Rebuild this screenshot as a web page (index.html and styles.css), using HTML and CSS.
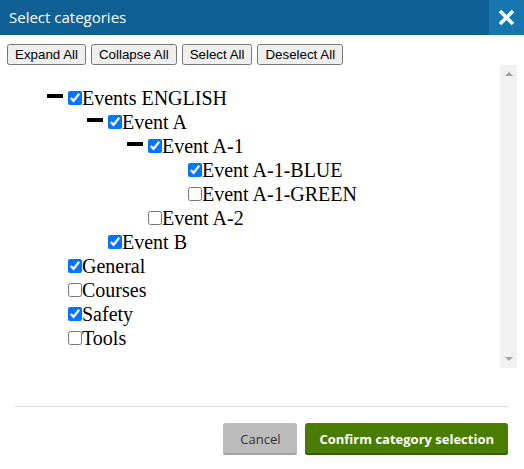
FILE: index.html
```html
<!DOCTYPE html>
<html>
<head>
<meta charset="utf-8">
<title>Select categories</title>
<link rel="stylesheet" href="styles.css">
</head>
<body>
<div class="dialog">
  <div class="titlebar">
    <div class="title">Select categories</div>
    <div class="close"><svg width="17" height="17" viewBox="0 0 17 17"><path d="M2 2L15 15M15 2L2 15" stroke="#fff" stroke-width="3.6" fill="none"/></svg></div>
  </div>
  <div class="toolbar">
    <button class="tool">Expand All</button>
    <button class="tool">Collapse All</button>
    <button class="tool">Select All</button>
    <button class="tool">Deselect All</button>
  </div>
  <div class="scrollarea">
    <div class="tree">
      <ul class="level root">
        <li><span class="toggle"></span><input type="checkbox" checked><span class="label">Events ENGLISH</span>
          <ul class="level">
            <li><span class="toggle"></span><input type="checkbox" checked><span class="label">Event A</span>
              <ul class="level">
                <li><span class="toggle"></span><input type="checkbox" checked><span class="label">Event A-1</span>
                  <ul class="level">
                    <li><span class="toggle leaf"></span><input type="checkbox" checked><span class="label">Event A-1-BLUE</span></li>
                    <li><span class="toggle leaf"></span><input type="checkbox"><span class="label">Event A-1-GREEN</span></li>
                  </ul>
                </li>
                <li><span class="toggle leaf"></span><input type="checkbox"><span class="label">Event A-2</span></li>
              </ul>
            </li>
            <li><span class="toggle leaf"></span><input type="checkbox" checked><span class="label">Event B</span></li>
          </ul>
        </li>
        <li><span class="toggle leaf"></span><input type="checkbox" checked><span class="label">General</span></li>
        <li><span class="toggle leaf"></span><input type="checkbox"><span class="label">Courses</span></li>
        <li><span class="toggle leaf"></span><input type="checkbox" checked><span class="label">Safety</span></li>
        <li><span class="toggle leaf"></span><input type="checkbox"><span class="label">Tools</span></li>
      </ul>
    </div>
    <div class="scrollbar">
      <span class="arrow up"></span>
      <span class="arrow down"></span>
    </div>
  </div>
  <div class="footer">
    <button class="btn cancel">Cancel</button>
    <button class="btn confirm">Confirm category selection</button>
  </div>
</div>
</body>
</html>
```
FILE: styles.css
```css
html, body {
  margin: 0;
  padding: 0;
  background: #fff;
}
.dialog {
  width: 524px;
  height: 469px;
  display: flex;
  flex-direction: column;
}
.titlebar {
  height: 35px;
  display: flex;
  background: #0f6195;
}
.title {
  flex: 1;
  padding-left: 9px;
  color: #fff;
  font-family: "Open Sans", sans-serif;
  font-size: 15px;
  line-height: 35px;
}
.close {
  width: 35px;
  background: #1675ae;
  display: flex;
  align-items: center;
  justify-content: center;
}
.close svg {
  display: block;
}
.toolbar {
  display: flex;
  gap: 5px;
  padding: 9px 7px 0 7px;
}
.tool {
  font-family: "Liberation Sans", Arial, sans-serif;
  font-size: 13.333px;
  margin: 0;
}
.scrollarea {
  display: flex;
  height: 303px;
  margin: 0 7px 0 7px;
}
.tree {
  flex: 1;
  padding-top: 21px;
  font-family: "Liberation Serif", "Times New Roman", serif;
  font-size: 20px;
  color: #000;
}
.level {
  list-style: none;
  margin: 0;
  padding: 0 0 0 40px;
}
.level li {
  line-height: 24px;
}
.toggle {
  display: inline-block;
  width: 16px;
  height: 4px;
  background: #000;
  margin: 0 5px 7px 0;
  vertical-align: baseline;
}
.toggle.leaf {
  background: transparent;
}
.level input {
  width: 14px;
  height: 14px;
  margin: 4px 0 0 0;
  vertical-align: baseline;
}
.scrollbar {
  width: 17px;
  background: #f1f1f1;
  display: flex;
  flex-direction: column;
  justify-content: space-between;
  align-items: center;
  padding: 7px 0 7px 0;
  box-sizing: border-box;
}
.arrow {
  width: 0;
  height: 0;
  border-left: 4px solid transparent;
  border-right: 4px solid transparent;
}
.arrow.up {
  border-bottom: 4px solid #a3a3a3;
}
.arrow.down {
  border-top: 4px solid #a3a3a3;
}
.footer {
  margin: 38px 16px 0 15px;
  border-top: 1px solid #dcdcdc;
  padding-top: 16px;
  display: flex;
  justify-content: flex-end;
  gap: 8px;
}
.btn {
  height: 32px;
  border: none;
  border-radius: 3px;
  font-family: "Open Sans", sans-serif;
  font-size: 13px;
  margin: 0;
}
.cancel {
  padding: 0 17px;
  background: #bdbcbd;
  color: #333;
  box-shadow: inset 0 -2px 0 #a2a2a2;
}
.confirm {
  padding: 0 14px;
  background: #4a7c00;
  color: #fff;
  font-weight: bold;
  box-shadow: inset 0 -2px 0 #355a00;
}
```
